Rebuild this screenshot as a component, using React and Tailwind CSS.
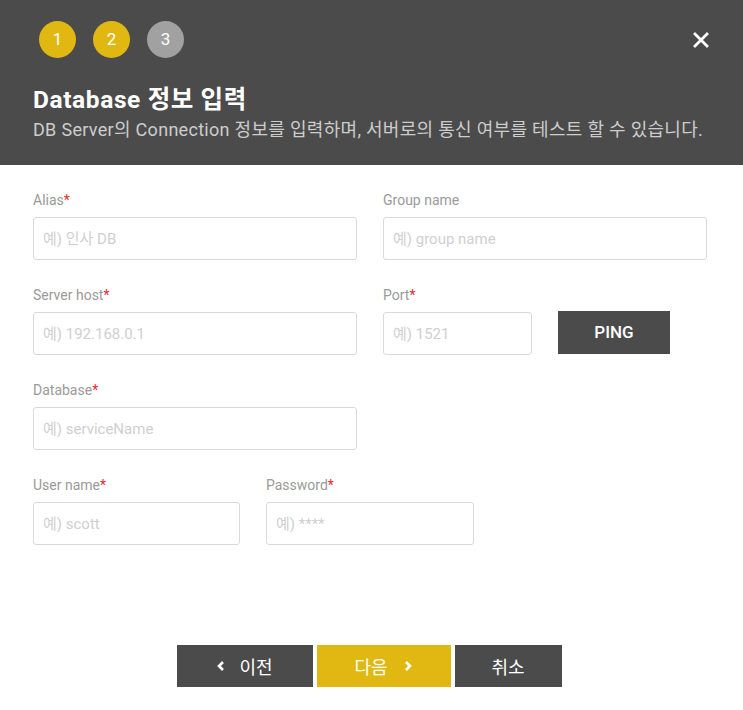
import { useState } from 'react';

const font = { fontFamily: 'Roboto, "Noto Sans CJK KR", sans-serif' };

const Field = ({ label, required, placeholder, className }) => (
    <div className={className}>
        <div className="h-[17px] text-[14px] leading-[17px] text-[#9a9a9a]">
            {label}
            {required && <span className="text-[#f0262a]">*</span>}
        </div>
        <input
            className="mt-[8px] block h-[43px] w-full rounded-[3px] border border-[#d9d9d9] bg-white px-[9px] text-[15px] text-[#333] placeholder:text-[#cfcfcf] outline-none"
            placeholder={placeholder}
        />
    </div>
);

const App = () => {
    const [step] = useState(2);

    return (
        <div className="w-[743px] h-[710px] bg-white flex flex-col" style={font}>
            {/* Header */}
            <div className="h-[165px] bg-[#4b4b4b] px-[33px] pt-[21px] text-white">
                <div className="flex items-center justify-between">
                    <div className="flex gap-[17px] pl-[6px]">
                        {[1, 2, 3].map((n) => (
                            <div
                                key={n}
                                className={`flex h-[37px] w-[37px] items-center justify-center rounded-full text-[17px] ${n <= step ? 'bg-[#e1b812]' : 'bg-[#a1a1a1]'}`}
                            >
                                {n}
                            </div>
                        ))}
                    </div>
                    <svg width="16" height="16" viewBox="0 0 16 16" className="mr-[1px]">
                        <path d="M2 2 L14 14 M14 2 L2 14" stroke="#fff" strokeWidth="2.8" strokeLinecap="square" />
                    </svg>
                </div>
                <h1 className="mt-[26px] text-[24.5px] font-bold leading-[31px] tracking-[0.6px]">Database 정보 입력</h1>
                <p className="mt-[3px] text-[18px] leading-[24px] tracking-[0.3px] text-[#cdcdcd]">
                    DB Server의 Connection 정보를 입력하며, 서버로의 통신 여부를 테스트 할 수 있습니다.
                </p>
            </div>

            {/* Form */}
            <div className="flex flex-col gap-[27px] px-[33px] pt-[27px]">
                <div className="flex gap-[26px]">
                    <Field className="w-[324px]" label="Alias" required placeholder="예) 인사 DB" />
                    <Field className="w-[324px]" label="Group name" placeholder="예) group name" />
                </div>
                <div className="flex gap-[26px]">
                    <Field className="w-[324px]" label="Server host" required placeholder="예) 192.168.0.1" />
                    <Field className="w-[149px]" label="Port" required placeholder="예) 1521" />
                    <button className="mt-[24px] h-[43px] w-[112px] bg-[#4b4b4b] text-[17px] font-medium text-white">
                        PING
                    </button>
                </div>
                <div className="flex gap-[26px]">
                    <Field className="w-[324px]" label="Database" required placeholder="예) serviceName" />
                </div>
                <div className="flex gap-[26px]">
                    <Field className="w-[207px]" label="User name" required placeholder="예) scott" />
                    <Field className="w-[208px]" label="Password" required placeholder="예) ****" />
                </div>
            </div>

            {/* Footer buttons */}
            <div className="mt-auto mb-[23px] flex justify-center gap-[4px] pr-[5px]" style={{ fontFamily: '"Noto Sans CJK KR", sans-serif' }}>
                <button className="flex h-[42px] w-[136px] items-center justify-center gap-[14px] bg-[#4b4b4b] text-[18px] text-white">
                    <svg width="9" height="12" viewBox="0 0 9 12">
                        <path d="M7 2 L3 6 L7 10" stroke="#fff" strokeWidth="2.6" fill="none" />
                    </svg>
                    이전
                </button>
                <button className="flex h-[42px] w-[134px] items-center justify-center gap-[16px] bg-[#e1b812] text-[18px] text-white">
                    다음
                    <svg width="9" height="12" viewBox="0 0 9 12">
                        <path d="M2 2 L6 6 L2 10" stroke="#fff" strokeWidth="2.6" fill="none" />
                    </svg>
                </button>
                <button className="flex h-[42px] w-[107px] items-center justify-center bg-[#4b4b4b] text-[18px] text-white">
                    취소
                </button>
            </div>
        </div>
    );
};

export default App;
